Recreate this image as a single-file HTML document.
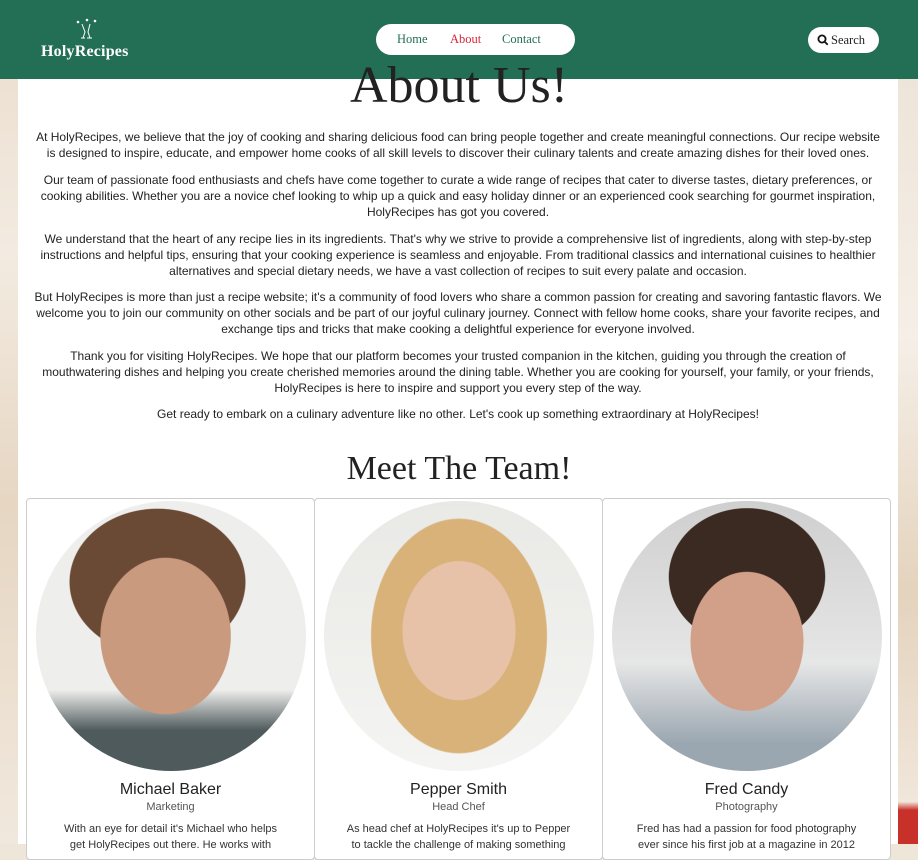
<!DOCTYPE html><html><head><style>
body{margin:0;width:918px;height:844px;overflow:hidden;background:#efe6da;font-family:"Liberation Sans",sans-serif;position:relative}
.bgl{position:absolute;top:0;bottom:0;left:0;width:18px;background:linear-gradient(180deg,#eadccb,#f3ebe1 30%,#e6d6c2 60%,#f1e8dd)}
.bgr{position:absolute;top:0;bottom:0;right:0;width:20px;background:linear-gradient(180deg,#ece2d5,#f5efe7 40%,#e4d3bd 70%,#f0e6da 95%,#c8302a 96%)}
.panel{position:absolute;left:18px;right:20px;top:0;bottom:0;background:#fff}
header{position:absolute;left:0;top:0;width:918px;height:79px;background:#236f55}
.logo{position:absolute;left:41px;top:43px;color:#fff;font-family:"Liberation Serif",serif;font-weight:bold;font-size:16px;letter-spacing:.2px}
.nav{position:absolute;left:376px;top:24px;width:199px;height:31px;background:#fff;border-radius:16px;font-family:"Liberation Serif",serif;font-size:12.5px}
.nav span{position:absolute;top:8px}
.search{position:absolute;left:808px;top:27px;width:71px;height:26px;background:#fff;border-radius:13px;font-family:"Liberation Serif",serif;font-size:12.5px;color:#222}
h1{position:absolute;left:0;width:918px;top:56px;margin:0;text-align:center;font-family:"Liberation Serif",serif;font-weight:normal;font-size:52px;color:#222}
.p{position:absolute;left:18px;width:880px;text-align:center;font-size:12px;line-height:16px;color:#222;white-space:nowrap}
h2{position:absolute;left:0;width:918px;top:450px;margin:0;text-align:center;font-family:"Liberation Serif",serif;font-weight:normal;font-size:34px;color:#222}
.card{position:absolute;top:498px;width:287px;height:360px;border:1px solid #ccc;border-radius:4px;background:#fff;text-align:center}
.circ{position:absolute;left:9px;top:2px;width:270px;height:270px;border-radius:50%}
.n{position:absolute;top:282px;width:100%;font-size:16px;color:#222}
.r{position:absolute;top:302px;width:100%;font-size:11px;color:#555}
.t{position:absolute;top:322px;width:100%;font-size:11px;color:#333;line-height:16px}
</style></head><body>
<div class="bgl"></div><div class="bgr"></div><div class="panel"></div>
<header>
<svg style="position:absolute;left:75px;top:18px" width="24" height="26" viewBox="0 0 24 26" fill="none" stroke="#fff" stroke-width="1"><path d="M7 6l3 8-2 6M15 6l-2 8 2 6M6 20h4M12 20h5"/><circle cx="3" cy="4" r=".8" fill="#fff"/><circle cx="20" cy="3" r=".8" fill="#fff"/><circle cx="12" cy="2" r=".8" fill="#fff"/></svg>
<div class="logo">HolyRecipes</div>
<div class="nav"><span style="left:21px;color:#236f55">Home</span><span style="left:74px;color:#d4283a">About</span><span style="left:126px;color:#236f55">Contact</span></div>
<div class="search"><svg style="position:absolute;left:9px;top:7px" width="12" height="12" viewBox="0 0 12 12" fill="none" stroke="#111" stroke-width="1.8"><circle cx="5" cy="5" r="3.6"/><path d="M7.7 7.7l3 3"/></svg><span style="position:absolute;left:23px;top:6px">Search</span></div>
</header>
<h1>About Us!</h1>
<div class="p" style="top:129px">At HolyRecipes, we believe that the joy of cooking and sharing delicious food can bring people together and create meaningful connections. Our recipe website<br>is designed to inspire, educate, and empower home cooks of all skill levels to discover their culinary talents and create amazing dishes for their loved ones.</div>
<div class="p" style="top:172px">Our team of passionate food enthusiasts and chefs have come together to curate a wide range of recipes that cater to diverse tastes, dietary preferences, or<br>cooking abilities. Whether you are a novice chef looking to whip up a quick and easy holiday dinner or an experienced cook searching for gourmet inspiration,<br>HolyRecipes has got you covered.</div>
<div class="p" style="top:231px">We understand that the heart of any recipe lies in its ingredients. That's why we strive to provide a comprehensive list of ingredients, along with step-by-step<br>instructions and helpful tips, ensuring that your cooking experience is seamless and enjoyable. From traditional classics and international cuisines to healthier<br>alternatives and special dietary needs, we have a vast collection of recipes to suit every palate and occasion.</div>
<div class="p" style="top:289px">But HolyRecipes is more than just a recipe website; it's a community of food lovers who share a common passion for creating and savoring fantastic flavors. We<br>welcome you to join our community on other socials and be part of our joyful culinary journey. Connect with fellow home cooks, share your favorite recipes, and<br>exchange tips and tricks that make cooking a delightful experience for everyone involved.</div>
<div class="p" style="top:348px">Thank you for visiting HolyRecipes. We hope that our platform becomes your trusted companion in the kitchen, guiding you through the creation of<br>mouthwatering dishes and helping you create cherished memories around the dining table. Whether you are cooking for yourself, your family, or your friends,<br>HolyRecipes is here to inspire and support you every step of the way.</div>
<div class="p" style="top:406px">Get ready to embark on a culinary adventure like no other. Let's cook up something extraordinary at HolyRecipes!</div>
<h2>Meet The Team!</h2>
<div class="card" style="left:26px"><div class="circ" style="background:radial-gradient(ellipse 30% 36% at 48% 50%,#c99a7e 0 80%,transparent 81%),radial-gradient(ellipse 36% 30% at 45% 30%,#6b4a35 0 90%,transparent 91%),linear-gradient(180deg,#eeeeec 0 70%,#4f5a5c 85%)"></div><div class="n">Michael Baker</div><div class="r">Marketing</div><div class="t">With an eye for detail it's Michael who helps<br>get HolyRecipes out there. He works with</div></div>
<div class="card" style="left:314px"><div class="circ" style="background:radial-gradient(ellipse 26% 32% at 50% 48%,#e7c2a8 0 80%,transparent 81%),radial-gradient(ellipse 36% 48% at 50% 50%,#d9b27a 0 90%,transparent 91%),linear-gradient(180deg,#e9e9e6,#f4f4f2)"></div><div class="n">Pepper Smith</div><div class="r">Head Chef</div><div class="t">As head chef at HolyRecipes it's up to Pepper<br>to tackle the challenge of making something</div></div>
<div class="card" style="left:602px"><div class="circ" style="background:radial-gradient(ellipse 26% 32% at 50% 52%,#d2a088 0 80%,transparent 81%),radial-gradient(ellipse 32% 28% at 50% 28%,#3a2a22 0 90%,transparent 91%),linear-gradient(180deg,#cfcfcf,#e6e6e6 60%,#9aa6b0 90%)"></div><div class="n">Fred Candy</div><div class="r">Photography</div><div class="t">Fred has had a passion for food photography<br>ever since his first job at a magazine in 2012</div></div>
</body></html>
